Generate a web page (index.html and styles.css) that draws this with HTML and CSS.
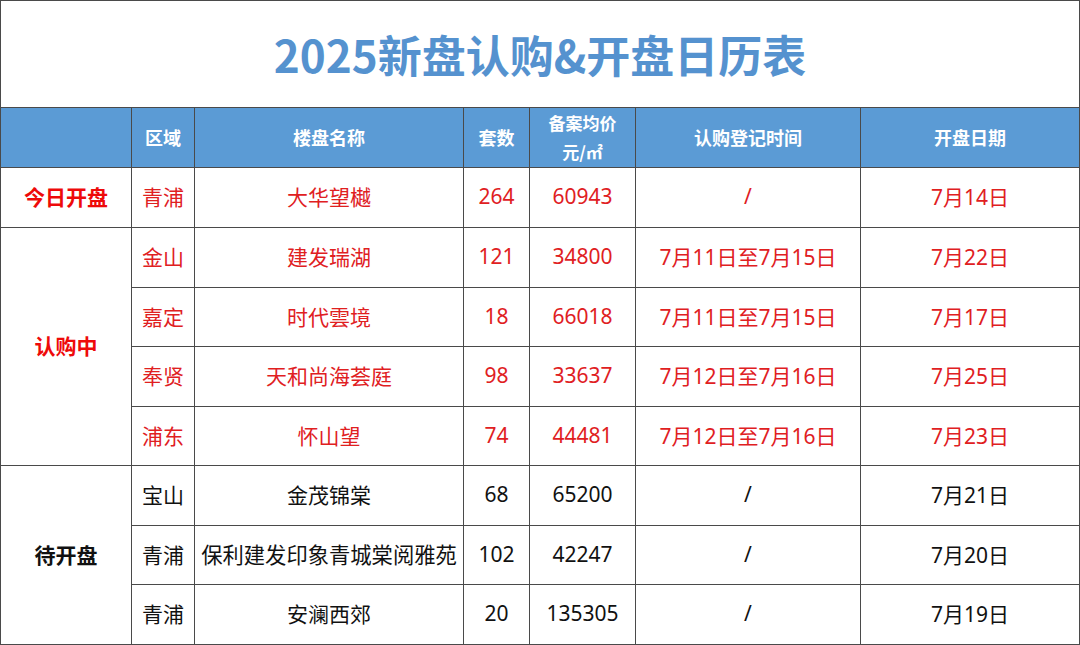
FILE: index.html
```html
<!DOCTYPE html>
<html lang="zh-CN">
<head>
<meta charset="utf-8">
<title>2025新盘认购&amp;开盘日历表</title>
<link rel="stylesheet" href="styles.css">
</head>
<body>
<table class="cal">
  <colgroup>
    <col class="c-cat"><col class="c-area"><col class="c-name"><col class="c-num">
    <col class="c-price"><col class="c-reg"><col class="c-open">
  </colgroup>
  <tr class="title-row"><td colspan="7" class="title">2025新盘认购&amp;开盘日历表</td></tr>
  <tr class="head">
    <th></th><th>区域</th><th>楼盘名称</th><th>套数</th>
    <th class="two">备案均价<br>元/㎡</th><th>认购登记时间</th><th>开盘日期</th>
  </tr>
  <tr class="row red r1">
    <td class="cat">今日开盘</td><td>青浦</td><td>大华望樾</td><td>264</td><td>60943</td><td>/</td><td>7月14日</td>
  </tr>
  <tr class="row red r2">
    <td class="cat" rowspan="4">认购中</td><td>金山</td><td>建发瑞湖</td><td>121</td><td>34800</td><td>7月11日至7月15日</td><td>7月22日</td>
  </tr>
  <tr class="row red r3">
    <td>嘉定</td><td>时代雲境</td><td>18</td><td>66018</td><td>7月11日至7月15日</td><td>7月17日</td>
  </tr>
  <tr class="row red r4">
    <td>奉贤</td><td>天和尚海荟庭</td><td>98</td><td>33637</td><td>7月12日至7月16日</td><td>7月25日</td>
  </tr>
  <tr class="row red r5">
    <td>浦东</td><td>怀山望</td><td>74</td><td>44481</td><td>7月12日至7月16日</td><td>7月23日</td>
  </tr>
  <tr class="row r6">
    <td class="cat dark" rowspan="3">待开盘</td><td>宝山</td><td>金茂锦棠</td><td>68</td><td>65200</td><td>/</td><td>7月21日</td>
  </tr>
  <tr class="row r7">
    <td>青浦</td><td class="long">保利建发印象青城棠阅雅苑</td><td>102</td><td>42247</td><td>/</td><td>7月20日</td>
  </tr>
  <tr class="row r8">
    <td>青浦</td><td>安澜西郊</td><td>20</td><td>135305</td><td>/</td><td>7月19日</td>
  </tr>
</table>
</body>
</html>
```

FILE: styles.css
```css
html, body {
  margin: 0;
  padding: 0;
  background: #ffffff;
}

.cal {
  width: 1079px;
  height: 644px;
  margin: 0;
  table-layout: fixed;
  border-collapse: collapse;
  font-family: "Noto Sans", "Noto Sans CJK SC", sans-serif;
  color: #111111;
}

.c-cat { width: 131px; }
.c-area { width: 63px; }
.c-name { width: 269px; }
.c-num { width: 66px; }
.c-price { width: 106px; }
.c-reg { width: 225px; }
.c-open { width: 219px; }

.cal td, .cal th {
  border: 1px solid #4a4a4a;
  padding: 0;
  text-align: center;
  vertical-align: middle;
  white-space: nowrap;
  overflow: hidden;
}

.title-row { height: 107px; }

.title {
  font-family: "Noto Sans CJK SC", sans-serif;
  font-weight: 700;
  font-size: 44px;
  color: #5592cf;
  padding-bottom: 2px;
}

.head { height: 60px; }

.head th {
  background: #5b9bd5;
  color: #ffffff;
  font-family: "Noto Sans CJK SC", sans-serif;
  font-weight: 700;
  font-size: 18px;
  line-height: 24px;
  padding-bottom: 2px;
}

.head th.two {
  font-size: 17px;
  line-height: 29px;
  padding-bottom: 1px;
}

.row td {
  font-size: 21px;
  font-weight: 400;
  padding-bottom: 3px;
}

.r1 { height: 60px; }
.r2 { height: 60px; }
.r3 { height: 59px; }
.r4 { height: 60px; }
.r5 { height: 59px; }
.r6 { height: 60px; }
.r7 { height: 59px; }
.r8 { height: 60px; }

.red td {
  color: #e0201f;
}

.row td.cat {
  font-family: "Noto Sans CJK SC", sans-serif;
  font-weight: 700;
  font-size: 21px;
  color: #ee0a0a;
}

.row td.cat.dark {
  color: #111111;
}

.row td.long {
  font-size: 21.3px;
}
```
